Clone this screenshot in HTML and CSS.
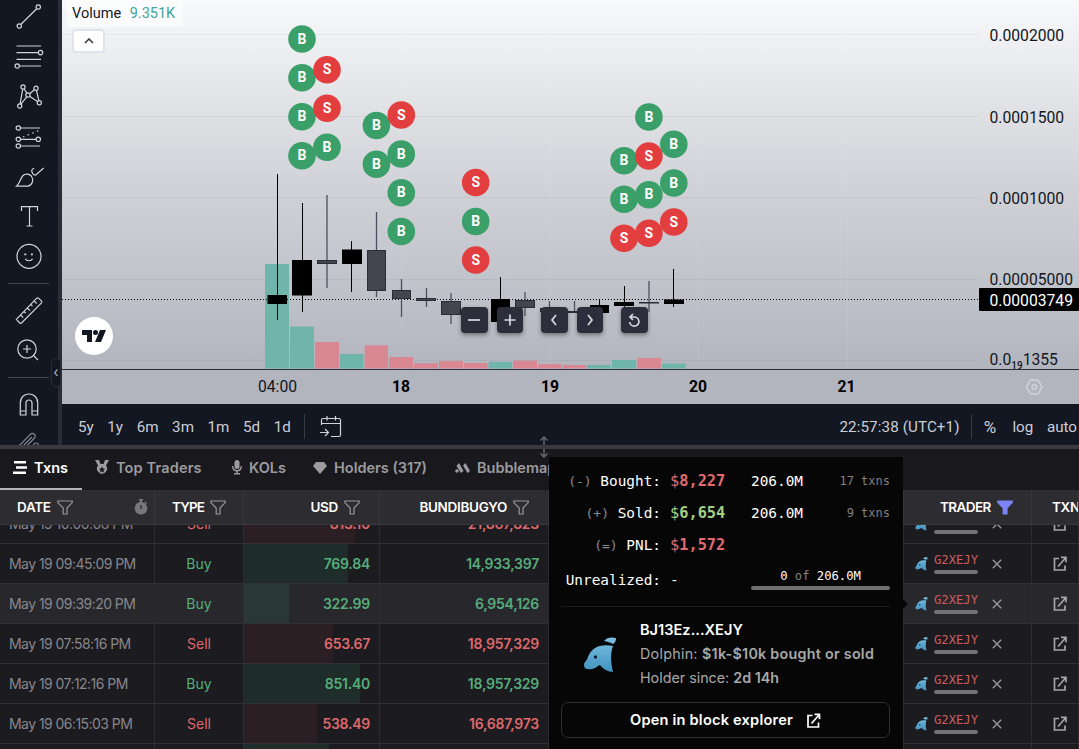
FILE: index.html
```html
<!DOCTYPE html>
<html lang="en">
<head>
  <meta charset="UTF-8">
  <title>BUNDIBUGYO chart</title>
  <link rel="stylesheet" href="styles.css">
</head>
<body>
  <svg class="defs">
    <linearGradient id="dolphinFill" x1="0" y1="0" x2="0" y2="1">
      <stop offset="0" stop-color="#7cbfe0"/>
      <stop offset="1" stop-color="#3f93c0"/>
    </linearGradient>
    <symbol id="funnel" viewBox="0 0 16 15"><path d="M.8 1h14.4v1.600L10 8v6H6.200V8L.8 2.600z"/></symbol>
    <symbol id="dolphin" viewBox="0 0 34 36">
      <path fill="url(#dolphinFill)" d="M21 4C24 0 29 0 33 1c0 3-1 5-3 6-3-2-6-2-9-3zM1 28c0-3 3-4 4-8C8 11 17 6 30 9c-3 8-2 17 0 26-5 0-10-3-13-7-3 1-5 4-8 4-5 1-8 0-8-4z"/>
      <circle cx="12.500" cy="20" r="1.700" fill="#123"/>
    </symbol>
    <symbol id="external" viewBox="0 0 14 15">
      <path fill="none" stroke="currentColor" stroke-width="1.700" d="M6 2.500H1.500V14H12V9.500M5 10.500L12.500 2M8 1.300h5v5"/>
    </symbol>
    <symbol id="close" viewBox="0 0 10 10"><path fill="none" stroke="currentColor" stroke-width="1.300" d="M.8.8l8.400 8.400M9.200.8L.8 9.200"/></symbol>
  </svg>

  <div class="chart-area">
    <div class="tools">
      <svg viewBox="0 0 28 28"><circle cx="23.300" cy="5" r="2.200"/><circle cx="4.300" cy="24" r="2.200"/><path d="M6 22.300L21.700 6.700"/></svg>
      <svg viewBox="0 0 28 28"><path d="M1.500 4h24.500M1.500 10.600h22M1.500 17.300h24.500M4.500 24H26"/><circle cx="25.500" cy="10.600" r="2.200"/><circle cx="2.200" cy="24" r="2.200"/></svg>
      <svg viewBox="0 0 28 28"><circle cx="8" cy="5" r="2.100"/><circle cx="21" cy="6.300" r="2.100"/><circle cx="12.900" cy="13" r="2.100"/><circle cx="4.700" cy="24" r="2.100"/><circle cx="24.300" cy="20.700" r="2.100"/><path d="M7.700 7.200L5.100 21.800M9 7l3 4.200M14.700 11.700l4.700-4M21.500 8.500l2.300 10M14.600 14.300l7.900 5.200M11.700 14.900L6 22.200"/></svg>
      <svg viewBox="0 0 28 28"><path d="M5.600 6H25M5.600 17.300h15.500M5.600 24H25"/><path stroke-dasharray="1.500 3.500" d="M8 15l16-6.500"/><circle cx="3.300" cy="6" r="2.200"/><circle cx="3.300" cy="17.300" r="2.200"/><circle cx="3.300" cy="24" r="2.200"/><circle cx="23.300" cy="17.300" r="2.200"/></svg>
      <svg viewBox="0 0 28 28"><path d="M1.500 24.200C5 21 5 17 8 13.500c2-2 6-2 8.300.5 2.500 3.200 1.600 9-3.300 10.200zM19.200 6.300c-3 1-3 3-1.500 5.200.8 1.300 1.800 2.200 3 1.500l8-7"/></svg>
      <svg viewBox="0 0 28 28"><path d="M6.500 9V4.700h16V9M14.500 4.700V24M11.500 24h6"/></svg>
      <svg viewBox="0 0 28 28"><circle cx="14" cy="14.300" r="12"/><path d="M10.300 16.800c1.300 2.600 6 2.600 7.300 0"/><path stroke-width="2" d="M10.300 11.500v1.800M16.900 11.500v1.800"/></svg>
      <hr>
      <svg viewBox="0 0 28 28"><path d="M1.300 23.300L21.700 2.200q1-.7 1.800 0l3 3q.7.800 0 1.600L6.500 27q-.9.700-1.700 0zM5.600 19l2.600 2.600M9 15.500l1.700 1.700M12.400 12l2.600 2.600M15.800 8.500l1.700 1.700M19.200 5l2.600 2.600"/></svg>
      <svg viewBox="0 0 28 28"><circle cx="12" cy="13" r="9.200"/><path d="M12 9v8M8 13h8M18.600 19.600l4.400 4.400"/></svg>
      <hr>
      <svg viewBox="0 0 28 28"><path d="M5.300 25V13c0-12 17.400-12 17.400 0v12H17V13c0-4-6-4-6 0v12zM5.300 21H11M17 21h5.700"/></svg>
      <svg class="pencil" viewBox="0 0 28 28"><path d="M3 17L15.500 4.200q2-1.700 4 .3 1.500 1.800 0 3.500L6 22l-6 2zM6 18L17 7"/><circle cx="21" cy="15.500" r="2.500"/></svg>
    </div>
    <div class="tools-edge"><span>‹</span></div>

    <div class="chart-col">
      <div class="plot">
        <svg class="chart" viewBox="62 0 1017 404">
          <g class="grid">
            <path d="M62 34.500h917M62 116.500h917M62 197.500h917M62 279.500h917M62 360.500h917"/>
            <path class="days" d="M401.500 0v369M550.500 0v369M698.500 0v369M847.500 0v369"/>
          </g>
          <g class="vol-up">
            <rect x="265" y="264" width="24" height="104.500"/>
            <rect x="290" y="326.500" width="24" height="42"/>
            <rect x="340" y="354" width="23.500" height="14.500"/>
            <rect x="488.500" y="362" width="23.500" height="6.500"/>
            <rect x="587" y="365" width="24" height="3.500"/>
            <rect x="612" y="360" width="24" height="8.500"/>
            <rect x="662" y="363.500" width="23.700" height="5"/>
          </g>
          <g class="vol-down">
            <rect x="315" y="342" width="24" height="26.500"/>
            <rect x="364.700" y="345.300" width="23.300" height="23.200"/>
            <rect x="389" y="357" width="24" height="11.500"/>
            <rect x="414" y="363.300" width="24" height="5.200"/>
            <rect x="439" y="361" width="24" height="7.500"/>
            <rect x="464" y="363" width="23.500" height="5.500"/>
            <rect x="513" y="360.700" width="24" height="7.800"/>
            <rect x="538" y="364" width="23.500" height="4.500"/>
            <rect x="562.700" y="365" width="23.500" height="3.500"/>
            <rect x="637" y="358" width="24" height="10.500"/>
          </g>
          <path class="last-price" d="M62 299.500h917"/>
          <g class="candle-down">
            <path d="M327 195v93M376.500 212v85M401.500 279v38M426.500 288v19M451 293v31M525 292v24M549.500 301v12M574.500 301v12M649 281v31"/>
            <rect x="317.500" y="260.500" width="19" height="3"/>
            <rect x="367.500" y="250.500" width="18" height="40"/>
            <rect x="392.500" y="290.500" width="18" height="8"/>
            <rect x="416.500" y="298.500" width="19" height="2"/>
            <rect x="441.500" y="301.500" width="19" height="13"/>
            <rect x="515.500" y="300.500" width="19" height="7"/>
            <rect x="540.500" y="308.500" width="19" height="3"/>
            <rect x="565.500" y="311.500" width="19" height="1"/>
            <rect x="639.500" y="302.500" width="19" height=".5"/>
          </g>
          <g class="candle-up">
            <path d="M277.500 174v146M302.500 203v109M351.500 241v51M500.500 277v45M599.500 300v10M624.500 286v21M673.500 269v38"/>
            <rect x="267.500" y="295" width="19.500" height="9"/>
            <rect x="292" y="260" width="20" height="35.500"/>
            <rect x="342" y="249.500" width="20" height="14.500"/>
            <rect x="491" y="299" width="19" height="23"/>
            <rect x="590" y="305" width="19" height="8"/>
            <rect x="614" y="302" width="20" height="4"/>
            <rect x="664" y="299.500" width="20" height="4.500"/>
          </g>
          <g id="markers"></g>

          <g class="axis">
            <path class="axis-line" d="M62 369.500h1017"/>
            <text x="989.500" y="41">0.0002000</text>
            <text x="989.500" y="122.500">0.0001500</text>
            <text x="989.500" y="203.500">0.0001000</text>
            <text x="989.500" y="285">0.00005000</text>
            <rect x="979" y="288" width="100" height="23" rx="1"/>
            <text class="now" x="989.500" y="306">0.00003749</text>
            <text x="989.500" y="365">0.0<tspan class="sub" dy="3.500">19</tspan><tspan dy="-3.500">1355</tspan></text>
            <text class="mid" x="277.500" y="392">04:00</text>
            <text class="mid day" x="401" y="392">18</text>
            <text class="mid day" x="550" y="392">19</text>
            <text class="mid day" x="698" y="392">20</text>
            <text class="mid day" x="846.500" y="392">21</text>
          </g>
          <g class="axis-gear"><path d="M1030.500 380h7.500l4 7-4 7h-7.500l-4-7z"/><circle cx="1034.300" cy="387" r="2.300"/></g>
        </svg>
        <div class="legend">
          <div class="volume">Volume <span>9.351K</span></div>
          <div class="collapse"><svg viewBox="0 0 10 6"><path d="M1 5l4-4 4 4"/></svg></div>
        </div>
        <div class="tv-logo">
          <svg viewBox="0 0 24 12"><path d="M0 0h10v12H5V5H0z"/><circle cx="13.500" cy="2.500" r="2.500"/><path d="M18 0h6l-5 12h-6z"/></svg>
        </div>
        <div class="controls">
          <button><svg viewBox="0 0 14 14"><path d="M1 7h12"/></svg></button>
          <button><svg viewBox="0 0 14 14"><path d="M1.500 7h11M7 1.500v11"/></svg></button>
          <button class="gap"><svg viewBox="0 0 14 14"><path d="M9 2L5 7l4 5"/></svg></button>
          <button><svg viewBox="0 0 14 14"><path d="M5 2l4 5-4 5"/></svg></button>
          <button class="gap"><svg viewBox="0 0 14 14"><path d="M3 4h5a4.600 4.600 0 1 1-5.300 5M6 1L3 4l3 3"/></svg></button>
        </div>
      </div>

      <div class="range-bar">
        <span>5y</span><span>1y</span><span>6m</span><span>3m</span><span>1m</span><span>5d</span><span>1d</span>
        <i></i>
        <svg class="goto" viewBox="0 0 22 22"><path d="M1.500 9V4q0-1.500 1.500-1.500h16q1.500 0 1.500 1.500v15q0 1.500-1.500 1.500h-8M1.500 7.500h19M7 0v4.500M15.500 0v4.500M0 16.500h8M5 13l3.500 3.500L5 20"/></svg>
        <span class="clock">22:57:38 (UTC+1)</span>
        <i></i>
        <span class="pct">%</span><span class="log">log</span><span class="auto">auto</span>
      </div>
    </div>
  </div>

  <div class="splitter"><svg viewBox="0 0 10 22"><path d="M5 1v8M1.500 4.500L5 1l3.500 3.500M5 13v8M1.500 17.500L5 21l3.500-3.500"/></svg></div>

  <div class="tabs">
    <div class="tab active"><svg width="14" height="13" viewBox="0 0 14 13"><path d="M1 0h12v2.600H1zM3 5.200h11v2.600H3zM0 10.400h13V13H0z"/></svg><span>Txns</span></div>
    <div class="tab traders"><svg width="14" height="15" viewBox="0 0 14 15"><path fill-rule="evenodd" d="M0 0h4l1.500 4h3L10 0h4l-3 5.500a5 5 0 1 1-8 0zM7 6.500l-1 2-2 .3 1.500 1.500L5 12.500l2-1 2 1-.5-2.200L10 8.800l-2-.3z"/></svg><span>Top Traders</span></div>
    <div class="tab kols"><svg width="10" height="15" viewBox="0 0 10 15"><rect x="2.500" width="5" height="9" rx="2.500"/><path d="M0 6h1.300c0 5.500 7.400 5.500 7.400 0H10c0 3.500-1.500 5-4.300 5.500V13H8v1.500H2V13h2.300v-1.500C1.500 11 0 9.500 0 6z"/></svg><span>KOLs</span></div>
    <div class="tab holders"><svg width="14" height="12" viewBox="0 0 14 12"><path d="M3 0h8l3 4-7 8-7-8z"/></svg><span>Holders (317)</span></div>
    <div class="tab bubbles"><svg width="15" height="10" viewBox="0 0 15 10"><circle cx="1.900" cy="8" r="1.800"/><path d="M1.500 3L4 0l4.500 8-2.500 2zM8 2.500L10.500 0 15 8l-2.500 2z"/></svg><span>Bubblemaps</span></div>
  </div>

  <div class="table">
    <div class="row head">
      <div class="date">DATE <svg class="funnel"><use href="#funnel"/></svg>
        <svg class="timer" viewBox="0 0 14 16"><path d="M5 0h4v1.500H8V3a6.300 6.300 0 1 1-2 0V1.500H5zM11.500 2.500l1.600 1.600-1 1-1.600-1.600z"/><path class="hand" d="M7 6v4"/></svg>
      </div>
      <div class="type">TYPE <svg class="funnel"><use href="#funnel"/></svg></div>
      <div class="usd">USD <svg class="funnel"><use href="#funnel"/></svg></div>
      <div class="amount">BUNDIBUGYO <svg class="funnel"><use href="#funnel"/></svg></div>
      <div></div>
      <div class="trader">TRADER <svg class="funnel on"><use href="#funnel"/></svg></div>
      <div class="txn">TXN</div>
    </div>
    <div class="rows" id="rows"></div>
  </div>

  <div class="popup">
    <div class="stats">
      <div class="label"><small>(-)</small> Bought:</div><div class="money red"><b>$</b>8,227</div><div>206.0M</div><div class="count">17 txns</div>
      <div class="label"><small>(+)</small> Sold:</div><div class="money lime"><b>$</b>6,654</div><div>206.0M</div><div class="count">9 txns</div>
      <div class="label"><small>(=)</small> PNL:</div><div class="money red"><b>$</b>1,572</div><div></div><div></div>
      <div class="label">Unrealized:</div><div>-</div><div class="held">0 <em>of</em> 206.0M<hr></div>
    </div>
    <div class="holder">
      <svg><use href="#dolphin"/></svg>
      <div>
        <h4>BJ13Ez...XEJY</h4>
        <p class="kind">Dolphin: <b>$1k-$10k bought or sold</b></p>
        <p class="since">Holder since: <b>2d 14h</b></p>
      </div>
    </div>
    <div class="explorer"><span>Open in block explorer</span> <svg><use href="#external"/></svg></div>
  </div>

  <script src="script.js"></script>
</body>
</html>
```
FILE: styles.css
```css
* {
  box-sizing: border-box;
}
body {
  margin: 0;
  width: 1079px;
  height: 749px;
  overflow: hidden;
  position: relative;
  display: flex;
  flex-direction: column;
  background: #1b1a1f;
  color: #fff;
  font-family: Inter, "Open Sans", sans-serif;
  font-size: 14px;
}
body > div {
  flex: none;
}
.defs {
  position: absolute;
  width: 0;
  height: 0;
}

/* chart */
.chart-area {
  display: flex;
  height: 445px;
  background: #131722;
}
.tools {
  width: 58px;
  overflow: hidden;
  display: flex;
  flex-direction: column;
}
.tools svg {
  flex: none;
  width: 28px;
  height: 28px;
  margin: 6px 0 6px 14.7px;
  fill: none;
  stroke: #d1d4dc;
  stroke-width: 1.2;
  overflow: visible;
}
.tools svg:first-child {
  margin-top: 2px;
}
.tools .pencil {
  opacity: 0.6;
}
.tools hr {
  flex: none;
  width: 41px;
  height: 1px;
  border: 0;
  margin: 7px 0 6px 8px;
  background: #434651;
}
.tools-edge {
  width: 4px;
  background: #2a2d38;
  position: relative;
}
.tools-edge span {
  position: absolute;
  left: -7px;
  top: 358px;
  width: 10px;
  height: 29px;
  line-height: 26px;
  text-align: center;
  background: #131722;
  border: 1px solid #2a2d38;
  border-radius: 4px;
  color: #b2b5be;
}
.chart-col {
  flex: 1;
}
.plot {
  position: relative;
  height: 404px;
  background: linear-gradient(#f8f9fb 0, #e0e1e5 110px, #cecfd5 205px, #c0c2ca 290px, #b2b5be 370px);
  font-family: Roboto, sans-serif;
}
.chart {
  display: block;
  width: 1017px;
  height: 404px;
}
.grid path {
  stroke: rgba(42, 46, 57, 0.06);
}
.grid .days {
  stroke: rgba(255, 255, 255, 0.08);
}
.vol-up {
  fill: #6fb5ab;
}
.vol-down {
  fill: #d88793;
}
.last-price {
  stroke: #000;
  stroke-dasharray: 1 2;
}
.candle-down path {
  stroke: #4d505c;
  stroke-width: 1.3;
}
.candle-down rect {
  fill: #434651;
  stroke: #2a2c3a;
}
.candle-up path {
  stroke: #000;
}
.marker circle {
  fill: #3a9f69;
}
.marker.s circle {
  fill: #e23d3f;
}
.marker text {
  fill: #fff;
  font-size: 14px;
  font-weight: 700;
  text-anchor: middle;
}
.axis text {
  font-size: 15.7px;
  fill: #131722;
}
.axis .now {
  fill: #fff;
}
.axis .sub {
  font-size: 10px;
  font-weight: 500;
}
.axis .mid {
  text-anchor: middle;
}
.axis .day {
  font-weight: 700;
  fill: #000;
}
.axis-line {
  stroke: #2a2c3a;
}
.axis-gear {
  fill: none;
  stroke: #d1d4dc;
  stroke-width: 1.5;
}
.legend {
  position: absolute;
  left: 5px;
  top: 0;
}
.volume {
  width: 116px;
  height: 27px;
  padding-left: 5px;
  line-height: 28px;
  font-size: 14.5px;
  color: #131722;
  background: rgba(255, 255, 255, 0.6);
  white-space: nowrap;
}
.volume span {
  margin-left: 5px;
  color: #42a599;
}
.collapse {
  width: 33px;
  height: 24px;
  margin: 2px 0 0 5px;
  display: flex;
  align-items: center;
  justify-content: center;
  background: #fff;
  border: 2px solid #e0e3eb;
  border-radius: 4px;
}
.collapse svg {
  width: 10px;
  fill: none;
  stroke: #333642;
  stroke-width: 1.5;
}
.tv-logo {
  position: absolute;
  left: 13px;
  top: 317px;
  width: 38px;
  height: 38px;
  border-radius: 50%;
  background: #fff;
  display: flex;
  align-items: center;
  justify-content: center;
}
.tv-logo svg {
  width: 24px;
  height: 12px;
  fill: #131722;
}
.controls {
  position: absolute;
  left: 399px;
  top: 307px;
  display: flex;
  gap: 9px;
}
.controls button {
  width: 26.5px;
  height: 26px;
  padding: 0;
  border: 0;
  border-radius: 4px;
  background: #2c2e3b;
  box-shadow: 0 2px 4px rgba(0, 0, 0, 0.4);
  display: flex;
  align-items: center;
  justify-content: center;
}
.controls .gap {
  margin-left: 9px;
}
.controls svg {
  width: 14px;
  fill: none;
  stroke: #d8dae2;
  stroke-width: 1.7;
}
.range-bar {
  height: 41px;
  padding: 4px 0 0 16px;
  display: flex;
  align-items: center;
  gap: 13.6px;
  font-family: Roboto, sans-serif;
  font-size: 15.2px;
  color: #ccced6;
  white-space: nowrap;
}
.range-bar i {
  width: 1px;
  height: 25px;
  background: #363a45;
}
.range-bar i:first-of-type {
  margin-right: 1px;
}
.goto {
  width: 22px;
  height: 22px;
  fill: none;
  stroke: #d1d4dc;
  stroke-width: 1.2;
}
.range-bar .clock {
  margin-left: auto;
  margin-right: -2px;
  letter-spacing: 0.1px;
}
.range-bar .pct {
  width: 15px;
  margin-left: -2px;
  font-size: 17px;
}
.range-bar .auto {
  margin-right: 2px;
}

.splitter {
  position: relative;
  z-index: 3;
  height: 4px;
  background: #3b3a40;
}
.splitter svg {
  position: absolute;
  left: 539px;
  top: -9px;
  width: 10px;
  height: 22px;
  fill: none;
  stroke: #6a6b72;
  stroke-width: 1.4;
}

/* tabs */
.tabs {
  height: 41px;
  display: flex;
  background: #19181c;
  font-size: 14.5px;
  font-weight: 600;
  color: #9c9b9f;
}
.tab {
  display: flex;
  align-items: center;
  gap: 7px;
  padding-bottom: 4px;
  white-space: nowrap;
}
.tab svg {
  flex: none;
  fill: currentColor;
}
.active {
  width: 82px;
  margin-right: 13px;
  padding: 0 0 2px 13px;
  color: #fff;
  border-bottom: 2px solid #b5b4b9;
}
.traders {
  width: 137px;
  letter-spacing: 0.15px;
}
.kols {
  width: 81px;
}
.holders {
  width: 142px;
}
.bubbles {
  width: 94px;
  overflow: hidden;
}

/* transactions table */
.row {
  display: grid;
  grid-template-columns: 155px 89px 136px 169px 1fr 128px 47px;
  height: 40px;
  border-bottom: 1px solid #303035;
  background: #1c1b20;
}
.row > div {
  display: flex;
  align-items: center;
  border-right: 1px solid #2c2b30;
  overflow: hidden;
  white-space: nowrap;
}
.head {
  height: 35px;
  background: #2d2c31;
  border-bottom: 1px solid #39383d;
  font-weight: 600;
  font-size: 13.5px;
  letter-spacing: -0.3px;
  position: relative;
  z-index: 1;
}
.row.head > div {
  border-color: #37363b;
}
.funnel {
  flex: none;
  width: 16px;
  height: 15px;
  margin-left: 6px;
  fill: none;
  stroke: #99989c;
  stroke-width: 1.2;
}
.funnel.on {
  fill: #7b84f5;
  stroke: #7b84f5;
}
.head .date {
  padding-left: 17px;
}
.timer {
  width: 14px;
  height: 16px;
  margin: 0 6px 0 auto;
  fill: #78777b;
}
.timer .hand {
  stroke: #2d2c31;
  stroke-width: 1.3;
}
.head .type {
  justify-content: center;
  letter-spacing: -0.9px;
}
.head .usd,
.head .amount {
  justify-content: flex-end;
  padding-right: 19px;
}
.head .trader {
  padding-left: 36px;
  letter-spacing: -0.6px;
}
.head .txn {
  padding-left: 20px;
}
/* the list is scrolled half a row under the header */
.rows {
  margin-top: -21px;
}
.rows .date {
  padding-left: 9px;
  color: #88878b;
  letter-spacing: -0.55px;
}
.rows .type {
  justify-content: center;
}
.rows .usd,
.rows .amount {
  position: relative;
  justify-content: flex-end;
  padding-right: 9px;
  font-weight: 600;
  letter-spacing: -0.25px;
}
.usd i {
  position: absolute;
  left: 0;
  top: 0;
  bottom: 0;
}
.usd span {
  position: relative;
}
.buy .type,
.buy .usd,
.buy .amount {
  color: #56ad7c;
}
.sell .type,
.sell .usd,
.sell .amount {
  color: #df686b;
}
.buy i {
  background: #1e2d29;
}
.sell i {
  background: #2b1f24;
}
.row.hover {
  background: #28272c;
}
.hover i {
  background: #293834;
}
.rows .trader {
  padding-left: 11px;
  color: #9c9b9f;
}
.rows .trader .fish {
  width: 13px;
  height: 14px;
  margin-right: 6px;
}
.wallet {
  width: 44px;
  margin-right: 14px;
  font: 12.2px/14px "DejaVu Sans Mono", monospace;
  color: #cf5b60;
}
.wallet hr {
  height: 4px;
  margin: 3px 0 0;
  border: 0;
  border-radius: 2px;
  background: #727175;
}
.trader .x {
  width: 10px;
  height: 10px;
}
.rows .txn {
  padding-left: 21px;
  color: #a5a4a8;
}
.rows .txn svg {
  width: 14px;
  height: 15px;
}

/* trader popup */
.popup {
  position: absolute;
  left: 549px;
  top: 457px;
  width: 354px;
  height: 292px;
  padding: 8px 13px 0 12px;
  background: #060606;
  z-index: 2;
}
.popup::after {
  content: "";
  position: absolute;
  right: -5px;
  top: 142px;
  border: 5px solid transparent;
  border-left-color: #060606;
  border-right: 0;
}
.stats {
  display: grid;
  grid-template-columns: 100px 72px 70px 60px;
  column-gap: 9px;
  grid-template-rows: 32px 32px 32px 37px;
  align-items: center;
  height: 142px;
  border-bottom: 1px solid #1c1c1e;
  font-family: "DejaVu Sans Mono", monospace;
  font-size: 14.4px;
  white-space: nowrap;
}
.label {
  text-align: right;
}
.label small {
  font-size: 13px;
  color: #8a8a8a;
}
.money {
  font-weight: 700;
  font-size: 15.3px;
}
.money b {
  font-weight: 400;
}
.red {
  color: #e06a6c;
}
.lime {
  color: #a5cf82;
}
.count {
  text-align: right;
  font-size: 12px;
  color: #808080;
}
.held {
  grid-column: 3 / 5;
  text-align: center;
  font-size: 12.2px;
}
.held em {
  font-style: normal;
  color: #808080;
}
.held hr {
  height: 4px;
  margin: 3px 0 0;
  border: 0;
  border-radius: 2px;
  background: #707070;
}
.holder {
  display: flex;
  height: 95px;
  padding: 11px 0 0 22px;
  color: #a8a8a8;
}
.holder svg {
  width: 34px;
  height: 36px;
  margin: 19px 23px 0 0;
}
.holder h4,
.holder p {
  margin: 0;
  font-size: 14.3px;
  line-height: 24px;
  font-weight: 400;
  white-space: nowrap;
}
.holder h4 {
  font-weight: 600;
  font-size: 14.6px;
  color: #fff;
}
.holder .kind {
  letter-spacing: 0.27px;
}
.holder b {
  font-weight: 600;
}
.explorer {
  height: 36px;
  display: flex;
  align-items: center;
  justify-content: center;
  gap: 13px;
  border: 1px solid #2f2f31;
  border-radius: 7px;
  font-weight: 600;
  font-size: 14.6px;
  letter-spacing: 0.2px;
}
.explorer svg {
  width: 15px;
  height: 15px;
}
```
FILE: script.js
```js
// trade markers: x, y, side
const markers = [
  [302, 39, 'B'], [302, 77.7, 'B'], [302, 116.7, 'B'], [302, 155.7, 'B'],
  [327, 69.7, 'S'], [327, 108.3, 'S'], [327, 147.3, 'B'],
  [376.4, 125.5, 'B'], [376.4, 164.3, 'B'],
  [401.3, 115, 'S'], [401.3, 154, 'B'], [401.3, 192.7, 'B'], [401.3, 231.5, 'B'],
  [475.7, 182.5, 'S'], [475.7, 221.5, 'B'], [475.7, 260, 'S'],
  [624, 160.7, 'B'], [624, 199.3, 'B'], [624, 238.3, 'S'],
  [648.9, 117, 'B'], [648.9, 156, 'S'], [648.9, 194.7, 'B'], [648.9, 233.3, 'S'],
  [673.8, 144.3, 'B'], [673.8, 183, 'B'], [673.8, 222, 'S']
];

document.getElementById('markers').innerHTML = markers.map(([x, y, side]) => `
  <g class="marker ${side.toLowerCase()}">
    <circle cx="${x}" cy="${y}" r="13.8"/>
    <text x="${x}" y="${y + 4.5}">${side}</text>
  </g>`).join('');

// date, type, usd, amount, width of the usd bar
const txns = [
  ['May 19 10:00:08 PM', 'Sell', '813.10', '21,867,823', 111],
  ['May 19 09:45:09 PM', 'Buy', '769.84', '14,933,397', 104],
  ['May 19 09:39:20 PM', 'Buy', '322.99', '6,954,126', 45],
  ['May 19 07:58:16 PM', 'Sell', '653.67', '18,957,329', 89],
  ['May 19 07:12:16 PM', 'Buy', '851.40', '18,957,329', 116],
  ['May 19 06:15:03 PM', 'Sell', '538.49', '16,687,973', 73],
  ['', 'Buy', '', '', 85]
];

document.getElementById('rows').innerHTML = txns.map(([date, type, usd, amount, bar], i) => `
  <div class="row ${type.toLowerCase()} ${i === 2 ? 'hover' : ''}">
    <div class="date">${date}</div>
    <div class="type">${date && type}</div>
    <div class="usd"><i style="width: ${bar}px"></i><span>${usd}</span></div>
    <div class="amount">${amount}</div>
    <div></div>
    <div class="trader">${date && `
      <svg class="fish"><use href="#dolphin"/></svg>
      <div class="wallet">G2XEJY<hr></div>
      <svg class="x"><use href="#close"/></svg>`}
    </div>
    <div class="txn">${date && '<svg><use href="#external"/></svg>'}</div>
  </div>`).join('');
```
